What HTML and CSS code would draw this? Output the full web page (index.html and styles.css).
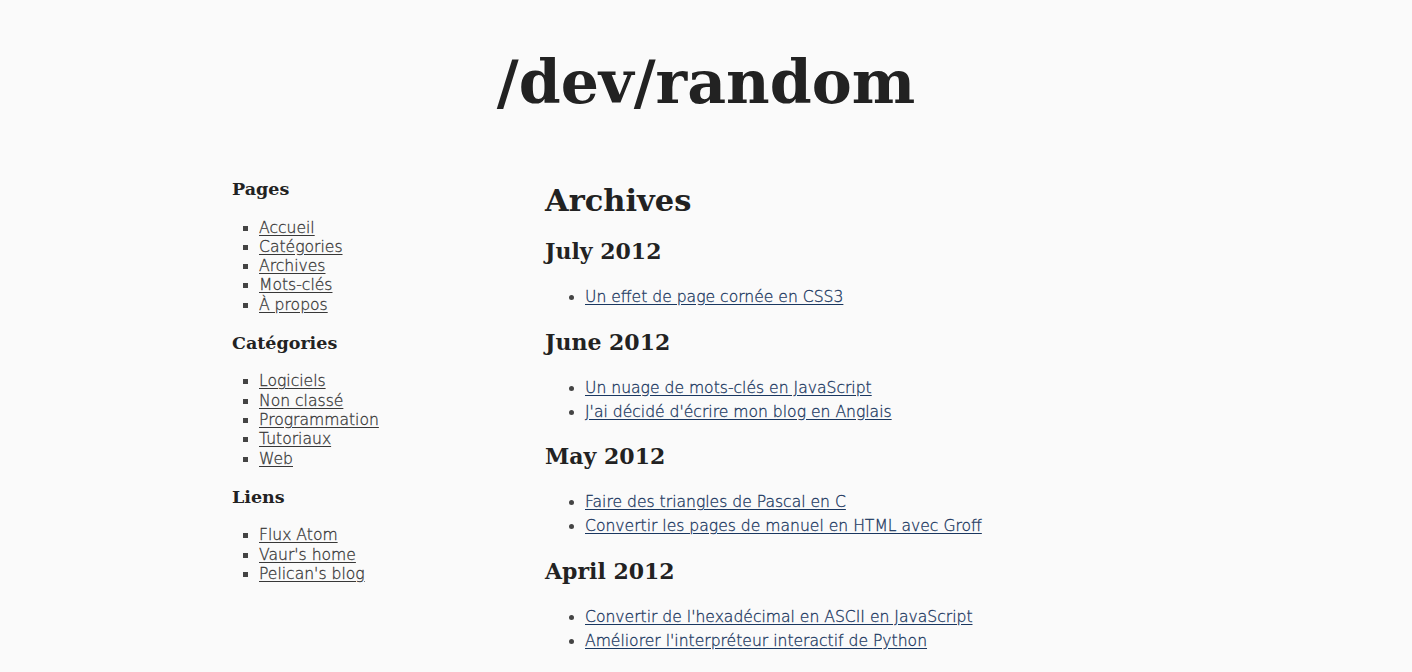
FILE: index.html
```html
<!DOCTYPE html>
<html lang="fr">
<head>
<meta charset="utf-8">
<title>/dev/random</title>
<link rel="stylesheet" href="styles.css">
</head>
<body>
<header class="site-header">
  <h1 class="site-title">/dev/random</h1>
</header>
<div class="wrap">
  <aside class="sidebar">
    <h2 class="side-title">Pages</h2>
    <ul class="side-list">
      <li><a href="#">Accueil</a></li>
      <li><a href="#">Catégories</a></li>
      <li><a href="#">Archives</a></li>
      <li><a href="#">Mots-clés</a></li>
      <li><a href="#">À propos</a></li>
    </ul>
    <h2 class="side-title">Catégories</h2>
    <ul class="side-list">
      <li><a href="#">Logiciels</a></li>
      <li><a href="#">Non classé</a></li>
      <li><a href="#">Programmation</a></li>
      <li><a href="#">Tutoriaux</a></li>
      <li><a href="#">Web</a></li>
    </ul>
    <h2 class="side-title">Liens</h2>
    <ul class="side-list">
      <li><a href="#">Flux Atom</a></li>
      <li><a href="#">Vaur's home</a></li>
      <li><a href="#">Pelican's blog</a></li>
    </ul>
  </aside>
  <main class="content">
    <h1 class="page-title">Archives</h1>
    <h2 class="month">July 2012</h2>
    <ul class="posts">
      <li><a href="#">Un effet de page cornée en CSS3</a></li>
    </ul>
    <h2 class="month">June 2012</h2>
    <ul class="posts">
      <li><a href="#">Un nuage de mots-clés en JavaScript</a></li>
      <li><a href="#">J'ai décidé d'écrire mon blog en Anglais</a></li>
    </ul>
    <h2 class="month">May 2012</h2>
    <ul class="posts">
      <li><a href="#">Faire des triangles de Pascal en C</a></li>
      <li><a href="#">Convertir les pages de manuel en HTML avec Groff</a></li>
    </ul>
    <h2 class="month">April 2012</h2>
    <ul class="posts">
      <li><a href="#">Convertir de l'hexadécimal en ASCII en JavaScript</a></li>
      <li><a href="#">Améliorer l'interpréteur interactif de Python</a></li>
    </ul>
  </main>
</div>
</body>
</html>
```
FILE: styles.css
```css
html, body {
  margin: 0;
  padding: 0;
  background: #fafafa;
  color: #222;
}
body {
  font-family: "DejaVu Sans", sans-serif;
  font-weight: 200;
  font-size: 15.6px;
}
a {
  text-underline-offset: 2px;
  -webkit-text-stroke: 0.3px currentColor;
}
.site-header {
  text-align: center;
  padding-top: 38px;
}
.site-title {
  margin: 0;
  font-family: "DejaVu Serif", serif;
  font-weight: bold;
  font-size: 60px;
  line-height: 88px;
  color: #222;
}
.wrap {
  width: 948px;
  margin: 0 auto;
  padding-top: 54px;
  display: flex;
}
.sidebar {
  width: 313px;
  flex: none;
}
.content {
  flex: 1;
}
.side-title {
  margin: 0 0 20.5px;
  font-family: "DejaVu Serif", serif;
  font-weight: bold;
  font-size: 17.5px;
  line-height: 18px;
  color: #222;
}
.side-list {
  list-style: square;
  margin: 0 0 19px;
  padding-left: 27px;
  line-height: 19.3px;
}
.side-list li::marker {
  color: #444;
}
.side-list a {
  color: #383838;
}
.page-title {
  margin: 0 0 16px;
  font-family: "DejaVu Serif", serif;
  font-weight: bold;
  font-size: 30.5px;
  line-height: 40px;
}
.month {
  margin: 0 0 19px;
  font-family: "DejaVu Serif", serif;
  font-weight: bold;
  font-size: 22px;
  line-height: 30px;
}
.posts {
  list-style: disc;
  margin: 0 0 17.5px;
  padding-left: 40px;
  line-height: 24px;
}
.posts li::marker {
  color: #444;
}
.posts a {
  color: #1a3760;
}
```
